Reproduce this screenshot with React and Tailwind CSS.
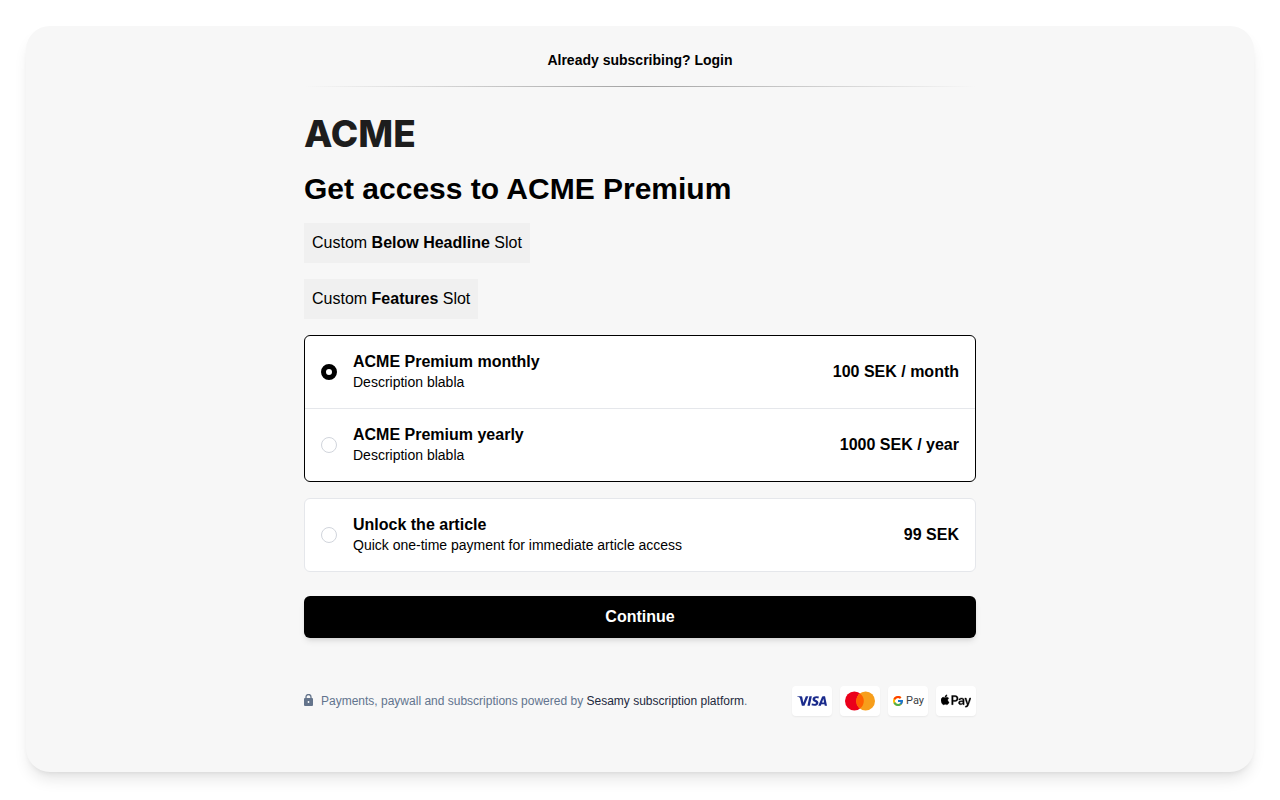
import { useState } from "react";
import { FaApplePay } from "react-icons/fa";
import { FcGoogle } from "react-icons/fc";
import { SiVisa } from "react-icons/si";

const groups = [
  [
    { id: "monthly", title: "ACME Premium monthly", description: "Description blabla", price: "100 SEK / month" },
    { id: "yearly", title: "ACME Premium yearly", description: "Description blabla", price: "1000 SEK / year" },
  ],
  [
    {
      id: "article",
      title: "Unlock the article",
      description: "Quick one-time payment for immediate article access",
      price: "99 SEK",
    },
  ],
];

function Plan({ plan, selected, onSelect }) {
  return (
    <label htmlFor={plan.id} className="flex cursor-pointer items-center gap-4 px-4 py-4">
      <input
        id={plan.id}
        type="radio"
        name="plan"
        checked={selected}
        onChange={() => onSelect(plan.id)}
        className="size-4 shrink-0 appearance-none rounded-full border border-gray-300 bg-white checked:border-[5px] checked:border-black"
      />
      <span className="flex grow flex-col">
        <span className="font-bold leading-5">{plan.title}</span>
        <span className="text-sm leading-5">{plan.description}</span>
      </span>
      <span className="font-bold">{plan.price}</span>
    </label>
  );
}

function Badge({ label, children }) {
  return (
    <li
      aria-label={label}
      className="flex h-[30px] w-10 items-center justify-center rounded bg-white shadow-[0_1px_2px_rgba(0,0,0,0.06)]"
    >
      {children}
    </li>
  );
}

function Lock() {
  return (
    <svg viewBox="0 0 9 12" className="mb-0.5 h-3 w-[9px] shrink-0" aria-hidden="true">
      <path d="M2 5V3a2.5 2.5 0 0 1 5 0v2" fill="none" stroke="#64748b" strokeWidth="1.3" />
      <rect y="4" width="9" height="8" rx="1" fill="#64748b" />
      <circle cx="4.5" cy="8" r="0.9" fill="#fff" />
    </svg>
  );
}

export default function App() {
  const [selected, setSelected] = useState("monthly");

  return (
    <div className="min-h-screen bg-white p-[26px] pb-7 font-['Liberation_Sans',Arial,sans-serif] text-black">
      <main className="rounded-3xl bg-[#f7f7f7] px-6 pt-6 pb-14 shadow-[0_10px_15px_-3px_rgba(0,0,0,0.1),0_4px_6px_-4px_rgba(0,0,0,0.1)]">
        <div className="mx-auto max-w-2xl">
          <p className="text-center text-sm font-bold">
            Already subscribing? <a href="#login">Login</a>
          </p>
          <div className="mt-4 h-px bg-linear-to-r from-transparent via-[#a3a3a3] to-transparent" />

          <div className="mt-7 font-[Inter,sans-serif] text-[37px] leading-[38px] font-extrabold text-[#1d1d1d]">
            ACME
          </div>
          <h1 className="mt-[18px] text-3xl leading-9 font-bold">Get access to ACME Premium</h1>

          <div className="mt-4 flex flex-col items-start gap-4">
            <p className="bg-[#f0f0f0] p-2">
              Custom <b>Below Headline</b> Slot
            </p>
            <p className="bg-[#f0f0f0] p-2">
              Custom <b>Features</b> Slot
            </p>
          </div>

          <form className="mt-4" onSubmit={(e) => e.preventDefault()}>
            <div className="flex flex-col gap-4">
              {groups.map((group) => (
                <div
                  key={group[0].id}
                  className={
                    group.some((p) => p.id === selected)
                      ? "divide-y divide-gray-200 rounded-md border border-black bg-white"
                      : "divide-y divide-gray-200 rounded-md border border-gray-200 bg-white"
                  }
                >
                  {group.map((plan) => (
                    <Plan key={plan.id} plan={plan} selected={plan.id === selected} onSelect={setSelected} />
                  ))}
                </div>
              ))}
            </div>
            <button
              type="submit"
              className="mt-6 h-[42px] w-full cursor-pointer rounded-md bg-black font-bold text-white shadow-md"
            >
              Continue
            </button>
          </form>

          <footer className="mt-12 flex items-center justify-between">
            <div className="flex items-center gap-2 text-xs text-slate-500">
              <Lock />
              <p>
                Payments, paywall and subscriptions powered by{" "}
                <a href="#sesamy" className="text-slate-800">
                  Sesamy subscription platform
                </a>
                .
              </p>
            </div>
            <ul className="flex gap-2">
              <Badge label="Visa">
                <SiVisa className="size-[30px] text-[#1a2b8c]" />
              </Badge>
              <Badge label="Mastercard">
                <svg viewBox="0 0 30 20" className="h-5 w-[30px]" aria-hidden="true">
                  <circle cx="9.4" cy="10" r="9.4" fill="#eb001b" />
                  <circle cx="20.6" cy="10" r="9.4" fill="#f79e1b" />
                  <path d="M15 2.45a9.4 9.4 0 0 1 0 15.1a9.4 9.4 0 0 1 0-15.1z" fill="#ff5f00" />
                </svg>
              </Badge>
              <Badge label="Google Pay">
                <span className="flex items-center gap-0.5">
                  <FcGoogle className="size-3" />
                  <span className="font-[Roboto,sans-serif] text-[11px] leading-3 text-[#3c4043]">Pay</span>
                </span>
              </Badge>
              <Badge label="Apple Pay">
                <FaApplePay className="size-[30px] stroke-black stroke-[8]" />
              </Badge>
            </ul>
          </footer>
        </div>
      </main>
    </div>
  );
}
